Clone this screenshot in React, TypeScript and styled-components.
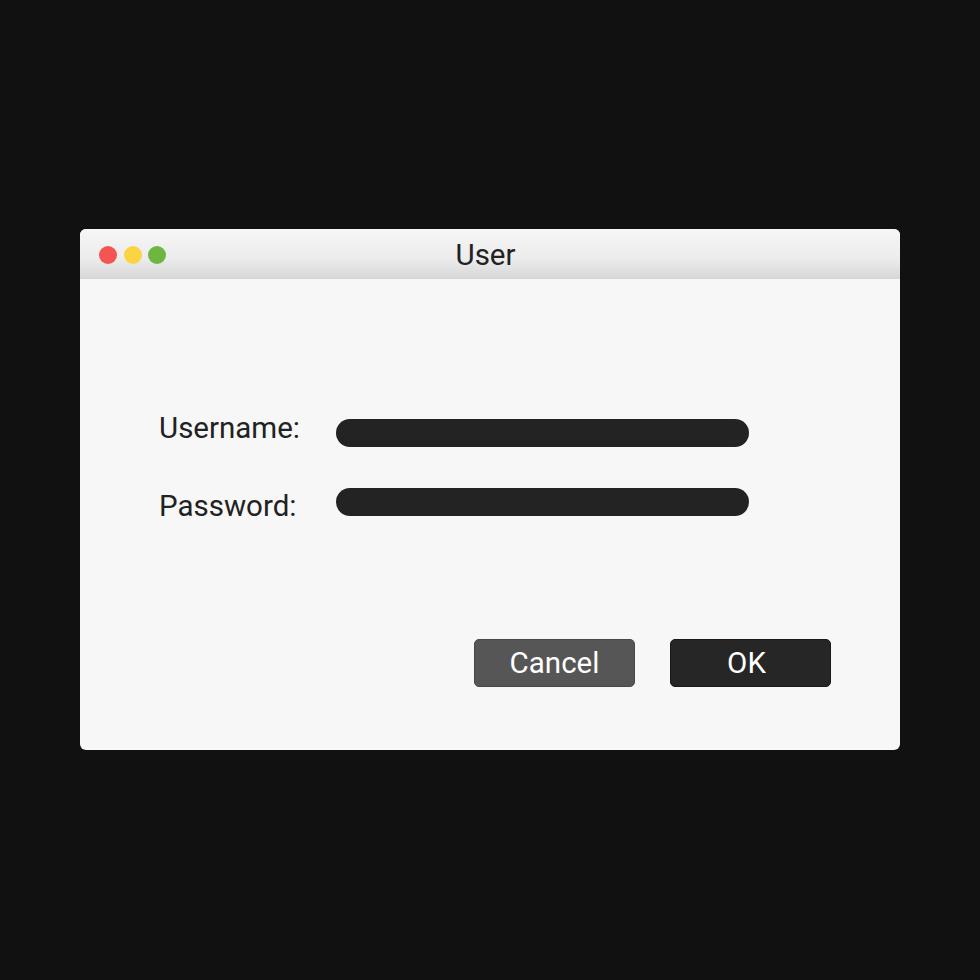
import React from 'react';
import styled, { createGlobalStyle } from 'styled-components';

const GlobalStyle = createGlobalStyle`
	html, body {
		margin: 0;
		padding: 0;
		background: #111111;
		font-family: Roboto, 'Liberation Sans', sans-serif;
	}
`;

const Page = styled.div`
	width: 980px;
	height: 980px;
	padding: 229px 80px 0;
	box-sizing: border-box;
`;

const Window = styled.div`
	width: 820px;
	height: 521px;
	background: #f7f7f7;
	border-radius: 6px;
	overflow: hidden;
	display: flex;
	flex-direction: column;
`;

const TitleBar = styled.div`
	position: relative;
	height: 50px;
	flex: none;
	background: linear-gradient(to bottom, #f6f6f6 0%, #ececec 60%, #d6d6d6 100%);
	display: flex;
	align-items: center;
	justify-content: center;
`;

const Lights = styled.div`
	position: absolute;
	left: 19px;
	top: 17px;
	display: flex;
	gap: 6.5px;
`;

const Light = styled.span<{ $color: string }>`
	width: 18px;
	height: 18px;
	border-radius: 50%;
	background: ${p => p.$color};
`;

const Title = styled.div`
	font-size: 29.5px;
	color: #222222;
	margin-left: -9px;
	margin-top: 1px;
`;

const Body = styled.div`
	flex: 1;
	display: flex;
	flex-direction: column;
	padding: 140px 69px 63px 79px;
`;

const Form = styled.div`
	display: grid;
	grid-template-columns: 177px 413px;
	row-gap: 41px;
`;

const Label = styled.label<{ $nudge: number }>`
	font-size: 29.5px;
	color: #222222;
	align-self: center;
	line-height: 28px;
	transform: translateY(${p => p.$nudge}px);
`;

const Field = styled.div`
	height: 28px;
	border-radius: 14px;
	background: #232323;
`;

const Actions = styled.div`
	margin-top: auto;
	display: flex;
	justify-content: flex-end;
	gap: 35px;
`;

const Button = styled.button<{ $primary?: boolean }>`
	width: 161px;
	height: 48px;
	border-radius: 5px;
	border: 1px solid ${p => (p.$primary ? '#1a1a1a' : '#484848')};
	background: ${p => (p.$primary ? '#262626' : '#565656')};
	color: #ffffff;
	font-family: Roboto, 'Liberation Sans', sans-serif;
	font-size: 29.5px;
	padding: 0 ${p => (p.$primary ? '8px' : '0')} 0 0;
	cursor: pointer;
`;

export default function App() {
	return (
		<>
			<GlobalStyle />
			<Page>
				<Window>
					<TitleBar>
						<Lights>
							<Light $color="#f45452" />
							<Light $color="#fbd443" />
							<Light $color="#6db63f" />
						</Lights>
						<Title>User</Title>
					</TitleBar>
					<Body>
						<Form>
							<Label $nudge={-5}>Username:</Label>
							<Field />
							<Label $nudge={4}>Password:</Label>
							<Field />
						</Form>
						<Actions>
							<Button>Cancel</Button>
							<Button $primary>OK</Button>
						</Actions>
					</Body>
				</Window>
			</Page>
		</>
	);
}
